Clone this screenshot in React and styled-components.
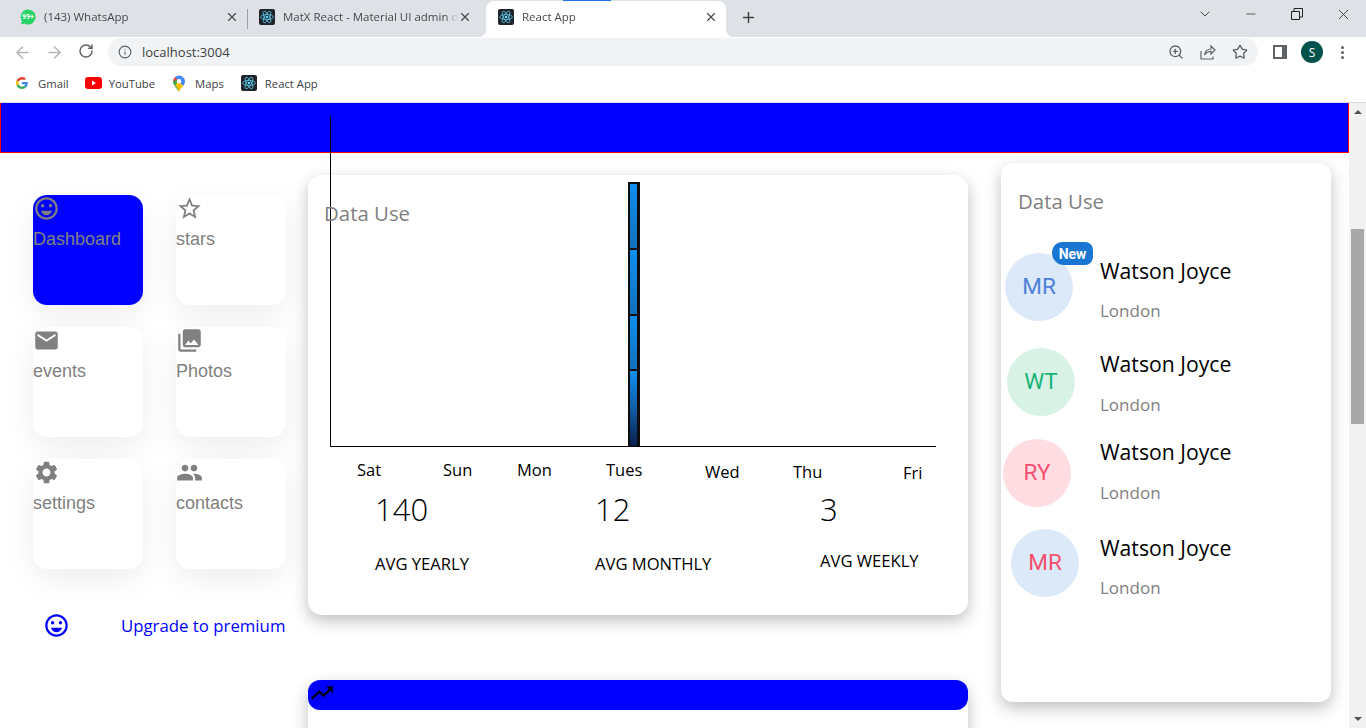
import React from "react";
import styled, { createGlobalStyle } from "styled-components";
import {
  MdEmail,
  MdOutlineEmojiEmotions,
  MdPeople,
  MdPhotoLibrary,
  MdSettings,
  MdStarBorder,
  MdTrendingUp,
} from "react-icons/md";
import {
  ArrowLeft,
  ArrowRight,
  ChevronDown,
  Info,
  Minus,
  Plus,
  RotateCw,
  Star,
  X,
  ZoomIn,
} from "lucide-react";

const UI_FONT = `"Open Sans", "Noto Sans", sans-serif`;

const GlobalStyle = createGlobalStyle`
  html, body {
    margin: 0;
    padding: 0;
    height: 728px;
    overflow: hidden;
    background: #fff;
    font-family: ${UI_FONT};
  }
`;

/* ---------- browser chrome ---------- */

const TabStrip = styled.div`
  position: relative;
  height: 37px;
  background: #dee1e6;
  display: flex;
  align-items: flex-end;
  padding-left: 8px;
`;

const Tab = styled.div`
  position: relative;
  width: ${(p) => p.$width}px;
  height: 36px;
  box-sizing: border-box;
  padding: 0 ${(p) => p.$right}px 4px ${(p) => p.$left}px;
  display: flex;
  align-items: center;
  gap: 8px;
  font-size: 11.5px;
  line-height: 15px;
  color: #45494d;
  background: ${(p) => (p.$active ? "#fff" : "transparent")};
  border-radius: 8px 8px 0 0;

  ${(p) =>
    p.$divider &&
    `&::after {
      content: "";
      position: absolute;
      right: 0;
      top: 8px;
      height: 20px;
      width: 1px;
      background: #9aa0a6;
    }`}

  ${(p) =>
    p.$active &&
    `&::before, &::after {
      content: "";
      position: absolute;
      bottom: 0;
      width: 8px;
      height: 8px;
    }
    &::before {
      left: -8px;
      background: radial-gradient(circle at 0 0, transparent 8px, #fff 8.5px);
    }
    &::after {
      right: -8px;
      background: radial-gradient(circle at 100% 0, transparent 8px, #fff 8.5px);
    }`}
`;

const TabTitle = styled.span`
  flex: 1;
  margin-right: -8px;
  margin-top: -1px;
  white-space: nowrap;
  overflow: hidden;
  mask-image: linear-gradient(to right, #000 calc(100% - 14px), transparent);
`;

const LoadingLine = styled.div`
  position: absolute;
  top: 0;
  left: 563px;
  width: 48px;
  height: 1px;
  background: #1a73e8;
`;

const NewTab = styled.div`
  width: 44px;
  height: 36px;
  padding-bottom: 4px;
  box-sizing: border-box;
  display: flex;
  align-items: center;
  justify-content: center;
  color: #3c4043;
`;

const WindowControls = styled.div`
  margin-left: auto;
  height: 28px;
  align-self: flex-start;
  display: flex;
  align-items: center;
  color: #222;
`;

const WindowButton = styled.div`
  width: 46px;
  display: flex;
  justify-content: center;
`;

const Toolbar = styled.div`
  height: 35px;
  box-sizing: border-box;
  background: #fff;
  display: flex;
  align-items: center;
  padding: 1px 0 6px;
`;

const NavButton = styled.div`
  width: 32px;
  display: flex;
  justify-content: center;
  color: ${(p) => (p.$off ? "#b4b6b9" : "#5f6368")};
`;

const NavGroup = styled.div`
  width: 108px;
  padding-left: 6px;
  box-sizing: border-box;
  display: flex;
`;

const Omnibox = styled.div`
  width: 1150px;
  height: 28px;
  background: #f1f3f4;
  border-radius: 14px;
  display: flex;
  align-items: center;
  padding: 0 10px;
  box-sizing: border-box;
  color: #5f6368;
  gap: 10px;
`;

const Url = styled.span`
  font-size: 13px;
  color: #3c4043;
  flex: 1;
`;

const OmniIcons = styled.div`
  display: flex;
  align-items: center;
  gap: 16px;
`;

const ProfileIcons = styled.div`
  flex: 1;
  display: flex;
  align-items: center;
  padding-left: 15px;
  color: #5f6368;
`;

const Profile = styled.div`
  width: 22px;
  height: 22px;
  margin-left: 14px;
  border-radius: 50%;
  background: #00524a;
  color: #fff;
  font-size: 12px;
  display: flex;
  align-items: center;
  justify-content: center;
`;

const MenuDots = styled.div`
  margin-left: 18px;
  display: flex;
  flex-direction: column;
  gap: 2px;

  i {
    width: 3px;
    height: 3px;
    border-radius: 50%;
    background: #5f6368;
  }
`;

const Bookmarks = styled.div`
  height: 31px;
  box-sizing: border-box;
  border-bottom: 1px solid #dadce0;
  background: #fff;
  display: flex;
  align-items: center;
  padding: 0 0 8px 16px;
  font-size: 11.3px;
  color: #3c4043;
`;

const Bookmark = styled.div`
  display: flex;
  align-items: center;
  gap: ${(p) => p.$gap}px;
  margin-right: ${(p) => p.$after}px;
`;

/* ---------- page ---------- */

const Viewport = styled.div`
  height: 625px;
  display: flex;
  overflow: hidden;
`;

const Page = styled.div`
  width: 1349px;
  flex: none;
`;

const Scrollbar = styled.div`
  flex: 1;
  background: #f1f1f1;
  padding: 7px 2px;
  display: flex;
  flex-direction: column;
  align-items: stretch;
`;

const ScrollArrow = styled.div`
  align-self: center;
  width: 0;
  height: 0;
  border-left: 4px solid transparent;
  border-right: 4px solid transparent;
  border-${(p) => (p.$down ? "top" : "bottom")}: 4px solid #505050;
  margin-top: ${(p) => (p.$down ? "auto" : "0")};
`;

const ScrollThumb = styled.div`
  height: 195px;
  margin-top: 115px;
  background: #a8a8a8;
`;

const Header = styled.div`
  height: 49px;
  background: #0000ff;
  border: 1px solid #ff0000;
  border-width: 0 1px 1px 1px;
`;

const Content = styled.div`
  display: flex;
  align-items: flex-start;
  padding-left: 33px;
`;

const Sidebar = styled.div`
  width: 253px;
  padding-top: 42px;
  flex: none;
`;

const TileGrid = styled.div`
  display: grid;
  grid-template-columns: 110px 110px;
  column-gap: 33px;
  row-gap: 22px;
`;

const Tile = styled.div`
  height: 110px;
  border-radius: 14px;
  background: ${(p) => (p.$active ? "#0000ff" : "#fff")};
  box-shadow: 0 10px 30px rgba(0, 0, 0, 0.07);
  color: #808080;
  font-family: "Liberation Sans", Arial, sans-serif;
  font-size: 18px;
  line-height: 21px;

  svg {
    display: block;
  }
`;

const TileLabel = styled.div`
  margin-top: 7px;
`;

const Upgrade = styled.div`
  display: flex;
  align-items: center;
  margin-top: 43px;
  padding-left: 10px;
  color: #0000ff;
  font-size: 16.8px;

  svg {
    flex: none;
  }
`;

const UpgradeText = styled.span`
  margin-left: 51px;
  white-space: nowrap;
`;

const Middle = styled.div`
  width: 660px;
  margin-left: 22px;
  padding-top: 22px;
  flex: none;
`;

const ChartCard = styled.div`
  position: relative;
  height: 440px;
  background: #fff;
  border-radius: 14px;
  box-shadow: 0 6px 16px rgba(0, 0, 0, 0.25);
`;

const ChartTitle = styled.div`
  position: absolute;
  left: 16px;
  top: 24px;
  font-size: 20.4px;
  color: #808080;
`;

const ChartSvg = styled.svg`
  display: block;
  overflow: visible;
  font-family: ${UI_FONT};
  font-size: 16.5px;
`;

const Stats = styled.div`
  display: grid;
  grid-template-columns: 220px 225px 1fr;
  padding-left: 67px;
  margin-top: -1px;
  color: #000;
`;

const StatValue = styled.div`
  font-size: 31px;
  font-weight: 300;
  line-height: 50px;
`;

const StatLabel = styled.div`
  font-size: 16.6px;
  line-height: 24px;
  margin-top: ${(p) => p.$top}px;
`;

const LowerCard = styled.div`
  margin-top: 65px;
  height: 200px;
  background: #fff;
  border-radius: 14px;
  box-shadow: 0 6px 16px rgba(0, 0, 0, 0.25);
`;

const LowerBar = styled.div`
  height: 30px;
  background: #0000ff;
  border-radius: 12px;
  color: #000;
  padding-left: 1px;

  svg {
    display: block;
  }
`;

const RightPanel = styled.div`
  width: 330px;
  height: 539px;
  margin: 10px 0 0 33px;
  flex: none;
  background: #fff;
  border-radius: 12px;
  box-shadow: 0 6px 16px rgba(0, 0, 0, 0.25);
  padding-top: 24px;
  box-sizing: border-box;
`;

const PanelTitle = styled.div`
  margin-left: 17px;
  font-size: 20.4px;
  line-height: 28px;
  color: #808080;
`;

const PersonRow = styled.div`
  display: flex;
  align-items: flex-start;
  margin-top: ${(p) => p.$top}px;
`;

const AvatarSlot = styled.div`
  width: 99px;
  flex: none;
  padding-left: ${(p) => p.$shift}px;
  box-sizing: border-box;
`;

const Avatar = styled.div`
  position: relative;
  width: 68px;
  height: 68px;
  padding-bottom: 2px;
  box-sizing: border-box;
  margin-top: ${(p) => p.$drop}px;
  border-radius: 50%;
  background: ${(p) => p.$bg};
  color: ${(p) => p.$fg};
  font-family: Roboto, sans-serif;
  font-size: 22.5px;
  display: flex;
  align-items: center;
  justify-content: center;
`;

const NewBadge = styled.div`
  position: absolute;
  left: 47px;
  top: -11px;
  width: 41px;
  height: 23px;
  border-radius: 10px 8px 8px 12px;
  background: #1976d2;
  color: #fff;
  font-family: Roboto, sans-serif;
  font-size: 14px;
  font-weight: 700;
  display: flex;
  align-items: center;
  justify-content: center;
`;

const PersonName = styled.div`
  font-size: 21.2px;
  line-height: 30px;
  color: #000;
`;

const PersonCity = styled.div`
  font-size: 17px;
  line-height: 24px;
  margin-top: ${(p) => p.$gap}px;
  color: #808080;
`;

/* ---------- drawings ---------- */

function ReactFavicon() {
  return (
    <svg width="16" height="16" viewBox="0 0 16 16" style={{ flex: "none" }}>
      <rect width="16" height="16" rx="2" fill="#20232a" />
      <g fill="none" stroke="#61dafb" strokeWidth="0.7">
        <ellipse cx="8" cy="8" rx="6.4" ry="2.5" />
        <ellipse cx="8" cy="8" rx="6.4" ry="2.5" transform="rotate(60 8 8)" />
        <ellipse cx="8" cy="8" rx="6.4" ry="2.5" transform="rotate(120 8 8)" />
      </g>
      <circle cx="8" cy="8" r="1.3" fill="#61dafb" />
    </svg>
  );
}

function WhatsAppBadge() {
  return (
    <svg width="16" height="16" viewBox="0 0 16 16" style={{ flex: "none" }}>
      <path d="M8 0.5a7.5 7.5 0 1 1-3.6 14L1 15.5l1-3.3A7.5 7.5 0 0 1 8 .5z" fill="#25d366" />
      <text x="8" y="10.4" textAnchor="middle" fontSize="7" fontWeight="700" fill="#fff" fontFamily="Roboto, sans-serif">
        99+
      </text>
    </svg>
  );
}

function GoogleIcon() {
  return (
    <svg width="12" height="12" viewBox="0 0 48 48">
      <path fill="#EA4335" d="M24 9.5c3.5 0 6.7 1.2 9.2 3.6l6.9-6.9C35.9 2.4 30.5 0 24 0 14.6 0 6.5 5.4 2.6 13.2l8 6.2C12.5 13.6 17.8 9.5 24 9.5z" />
      <path fill="#4285F4" d="M47 24.5c0-1.6-.1-3.1-.4-4.5H24v9h13c-.6 3-2.3 5.5-4.8 7.2l7.7 6C44.4 38 47 31.8 47 24.5z" />
      <path fill="#FBBC05" d="M10.5 28.6c-.5-1.4-.8-3-.8-4.6s.3-3.2.8-4.6l-8-6.2C.9 16.5 0 20.1 0 24s.9 7.5 2.6 10.8l7.9-6.2z" />
      <path fill="#34A853" d="M24 48c6.5 0 11.9-2.1 15.9-5.8l-7.7-6c-2.2 1.4-4.9 2.3-8.2 2.3-6.2 0-11.5-4.2-13.4-9.8l-8 6.2C6.5 42.6 14.6 48 24 48z" />
    </svg>
  );
}

function YouTubeIcon() {
  return (
    <svg width="17" height="12" viewBox="0 0 17 12">
      <rect width="17" height="12" rx="3" fill="#f00" />
      <path d="M7 3.5v5l4-2.5z" fill="#fff" />
    </svg>
  );
}

function MapsIcon() {
  return (
    <svg width="14" height="17" viewBox="0 0 14 17">
      <path d="M7 17C5.8 14 1 10.5 1 6.5L3 3l4 3.5z" fill="#34a853" />
      <path d="M1 6.5A6 6 0 0 1 3 2l3 2.5z" fill="#ea4335" />
      <path d="M3 2a6 6 0 0 1 8 0L7 6.5z" fill="#4285f4" />
      <path d="M11 2a6 6 0 0 1 2 4.5C13 8 12 9.5 11 11L7 6.5z" fill="#4285f4" />
      <path d="M7 17c.5-2.5 2.5-4 4-6L7 6.5 3 10c1.5 2 3.5 4.5 4 7z" fill="#fbbc05" />
      <circle cx="7" cy="6.2" r="2.2" fill="#fff" />
    </svg>
  );
}

function ShareIcon() {
  return (
    <svg width="16" height="16" viewBox="0 0 16 16" fill="none" stroke="currentColor" strokeWidth="1.2">
      <path d="M1 7v8h12v-2.5" />
      <path d="M4.5 11C5 7.5 7.5 5 11 5V2l4 4-4 4V7.3C8 7.3 6 8.5 4.5 11z" />
    </svg>
  );
}

function SidePanelIcon() {
  return (
    <svg width="14" height="14" viewBox="0 0 14 14">
      <path d="M0 0h14v14H0z M2 2v10h7V2z" fill="#5f6368" fillRule="evenodd" />
    </svg>
  );
}

function RestoreIcon() {
  return (
    <svg width="12" height="12" viewBox="0 0 12 12" fill="none" stroke="currentColor">
      <path d="M.5 3.5h8v8h-8z" />
      <path d="M3 3.5V.5h8.5V9H8.5" />
    </svg>
  );
}

const DAYS = [
  { name: "Sat", x: 49, y: 301 },
  { name: "Sun", x: 135, y: 301 },
  { name: "Mon", x: 209, y: 301 },
  { name: "Tues", x: 298, y: 301 },
  { name: "Wed", x: 397, y: 303 },
  { name: "Thu", x: 485, y: 303 },
  { name: "Fri", x: 595, y: 304 },
];

const BAR_SEGMENTS = [
  { top: 9, height: 64 },
  { top: 75, height: 64 },
  { top: 141, height: 53 },
  { top: 196, height: 75 },
];

function UsageChart() {
  return (
    <ChartSvg width="660" height="310" viewBox="0 0 660 310">
      <defs>
        <linearGradient id="barFill" x1="0" y1="0" x2="0" y2="1">
          <stop offset="0" stopColor="#0f8ff0" />
          <stop offset="1" stopColor="#1070ba" />
        </linearGradient>
        <linearGradient id="barFillLast" x1="0" y1="0" x2="0" y2="1">
          <stop offset="0" stopColor="#0f8ff0" />
          <stop offset="0.5" stopColor="#0f5ea6" />
          <stop offset="1" stopColor="#0a1c4a" />
        </linearGradient>
      </defs>
      <rect x="320" y="7" width="12" height="264" fill="#0c0c0c" />
      {BAR_SEGMENTS.map((s, i) => (
        <rect
          key={s.top}
          x="322"
          y={s.top}
          width="7"
          height={s.height}
          fill={i === BAR_SEGMENTS.length - 1 ? "url(#barFillLast)" : "url(#barFill)"}
        />
      ))}
      <path d="M22.5 -59V271.5H628" fill="none" stroke="#000" />
      {DAYS.map((d) => (
        <text key={d.name} x={d.x} y={d.y} fill="#000">
          {d.name}
        </text>
      ))}
    </ChartSvg>
  );
}

const TILES = [
  { label: "Dashboard", Icon: MdOutlineEmojiEmotions, active: true },
  { label: "stars", Icon: MdStarBorder },
  { label: "events", Icon: MdEmail },
  { label: "Photos", Icon: MdPhotoLibrary },
  { label: "settings", Icon: MdSettings },
  { label: "contacts", Icon: MdPeople },
];

const PEOPLE = [
  { initials: "MR", bg: "#dce9f8", fg: "#4f80d8", top: 41, shift: 4, drop: -3, gap: 13, badge: true },
  { initials: "WT", bg: "#d9f2e6", fg: "#18b377", top: 26, shift: 6, drop: -1, gap: 14 },
  { initials: "RY", bg: "#ffdde3", fg: "#f5506f", top: 20, shift: 2, drop: 2, gap: 14 },
  { initials: "MR", bg: "#dce9f8", fg: "#f5506f", top: 26, shift: 10, drop: -4, gap: 13 },
];

export default function App() {
  return (
    <>
      <GlobalStyle />
      <TabStrip>
        <LoadingLine />
        <Tab $width={240} $left={12} $right={9} $divider>
          <WhatsAppBadge />
          <TabTitle>(143) WhatsApp</TabTitle>
          <X size={14} strokeWidth={2} />
        </Tab>
        <Tab $width={238} $left={11} $right={14}>
          <ReactFavicon />
          <TabTitle>MatX React - Material UI admin dashboard</TabTitle>
          <X size={14} strokeWidth={2} />
        </Tab>
        <Tab $width={240} $left={12} $right={8} $active>
          <ReactFavicon />
          <TabTitle>React App</TabTitle>
          <X size={14} strokeWidth={2} />
        </Tab>
        <NewTab>
          <Plus size={17} strokeWidth={2} />
        </NewTab>
        <WindowControls>
          <WindowButton>
            <ChevronDown size={16} strokeWidth={1.2} />
          </WindowButton>
          <WindowButton>
            <Minus size={14} strokeWidth={1.2} />
          </WindowButton>
          <WindowButton>
            <RestoreIcon />
          </WindowButton>
          <WindowButton>
            <X size={17} strokeWidth={1.1} />
          </WindowButton>
        </WindowControls>
      </TabStrip>

      <Toolbar>
        <NavGroup>
          <NavButton $off>
            <ArrowLeft size={19} />
          </NavButton>
          <NavButton $off>
            <ArrowRight size={19} />
          </NavButton>
          <NavButton>
            <RotateCw size={16} strokeWidth={2.2} />
          </NavButton>
        </NavGroup>
        <Omnibox>
          <Info size={14} />
          <Url>localhost:3004</Url>
          <OmniIcons>
            <ZoomIn size={16} />
            <ShareIcon />
            <Star size={16} />
          </OmniIcons>
        </Omnibox>
        <ProfileIcons>
          <SidePanelIcon />
          <Profile>S</Profile>
          <MenuDots>
            <i />
            <i />
            <i />
          </MenuDots>
        </ProfileIcons>
      </Toolbar>

      <Bookmarks>
        <Bookmark $gap={10} $after={16}>
          <GoogleIcon />
          Gmail
        </Bookmark>
        <Bookmark $gap={7} $after={17}>
          <YouTubeIcon />
          YouTube
        </Bookmark>
        <Bookmark $gap={9} $after={17}>
          <MapsIcon />
          Maps
        </Bookmark>
        <Bookmark $gap={8} $after={0}>
          <ReactFavicon />
          React App
        </Bookmark>
      </Bookmarks>

      <Viewport>
        <Page>
          <Header />
          <Content>
            <Sidebar>
              <TileGrid>
                {TILES.map(({ label, Icon, active }) => (
                  <Tile key={label} $active={active}>
                    <Icon size={27} />
                    <TileLabel>{label}</TileLabel>
                  </Tile>
                ))}
              </TileGrid>
              <Upgrade>
                <MdOutlineEmojiEmotions size={27} />
                <UpgradeText>Upgrade to premium</UpgradeText>
              </Upgrade>
            </Sidebar>

            <Middle>
              <ChartCard>
                <ChartTitle>Data Use</ChartTitle>
                <UsageChart />
                <Stats>
                  <div>
                    <StatValue>140</StatValue>
                    <StatLabel $top={18}>AVG YEARLY</StatLabel>
                  </div>
                  <div>
                    <StatValue>12</StatValue>
                    <StatLabel $top={18}>AVG MONTHLY</StatLabel>
                  </div>
                  <div>
                    <StatValue>3</StatValue>
                    <StatLabel $top={15}>AVG WEEKLY</StatLabel>
                  </div>
                </Stats>
              </ChartCard>
              <LowerCard>
                <LowerBar>
                  <MdTrendingUp size={26} />
                </LowerBar>
              </LowerCard>
            </Middle>

            <RightPanel>
              <PanelTitle>Data Use</PanelTitle>
              {PEOPLE.map((p, i) => (
                <PersonRow key={i} $top={p.top}>
                  <AvatarSlot $shift={p.shift}>
                    <Avatar $bg={p.bg} $fg={p.fg} $drop={p.drop}>
                      {p.initials}
                      {p.badge && <NewBadge>New</NewBadge>}
                    </Avatar>
                  </AvatarSlot>
                  <div>
                    <PersonName>Watson Joyce</PersonName>
                    <PersonCity $gap={p.gap}>London</PersonCity>
                  </div>
                </PersonRow>
              ))}
            </RightPanel>
          </Content>
        </Page>
        <Scrollbar>
          <ScrollArrow />
          <ScrollThumb />
          <ScrollArrow $down />
        </Scrollbar>
      </Viewport>
    </>
  );
}
